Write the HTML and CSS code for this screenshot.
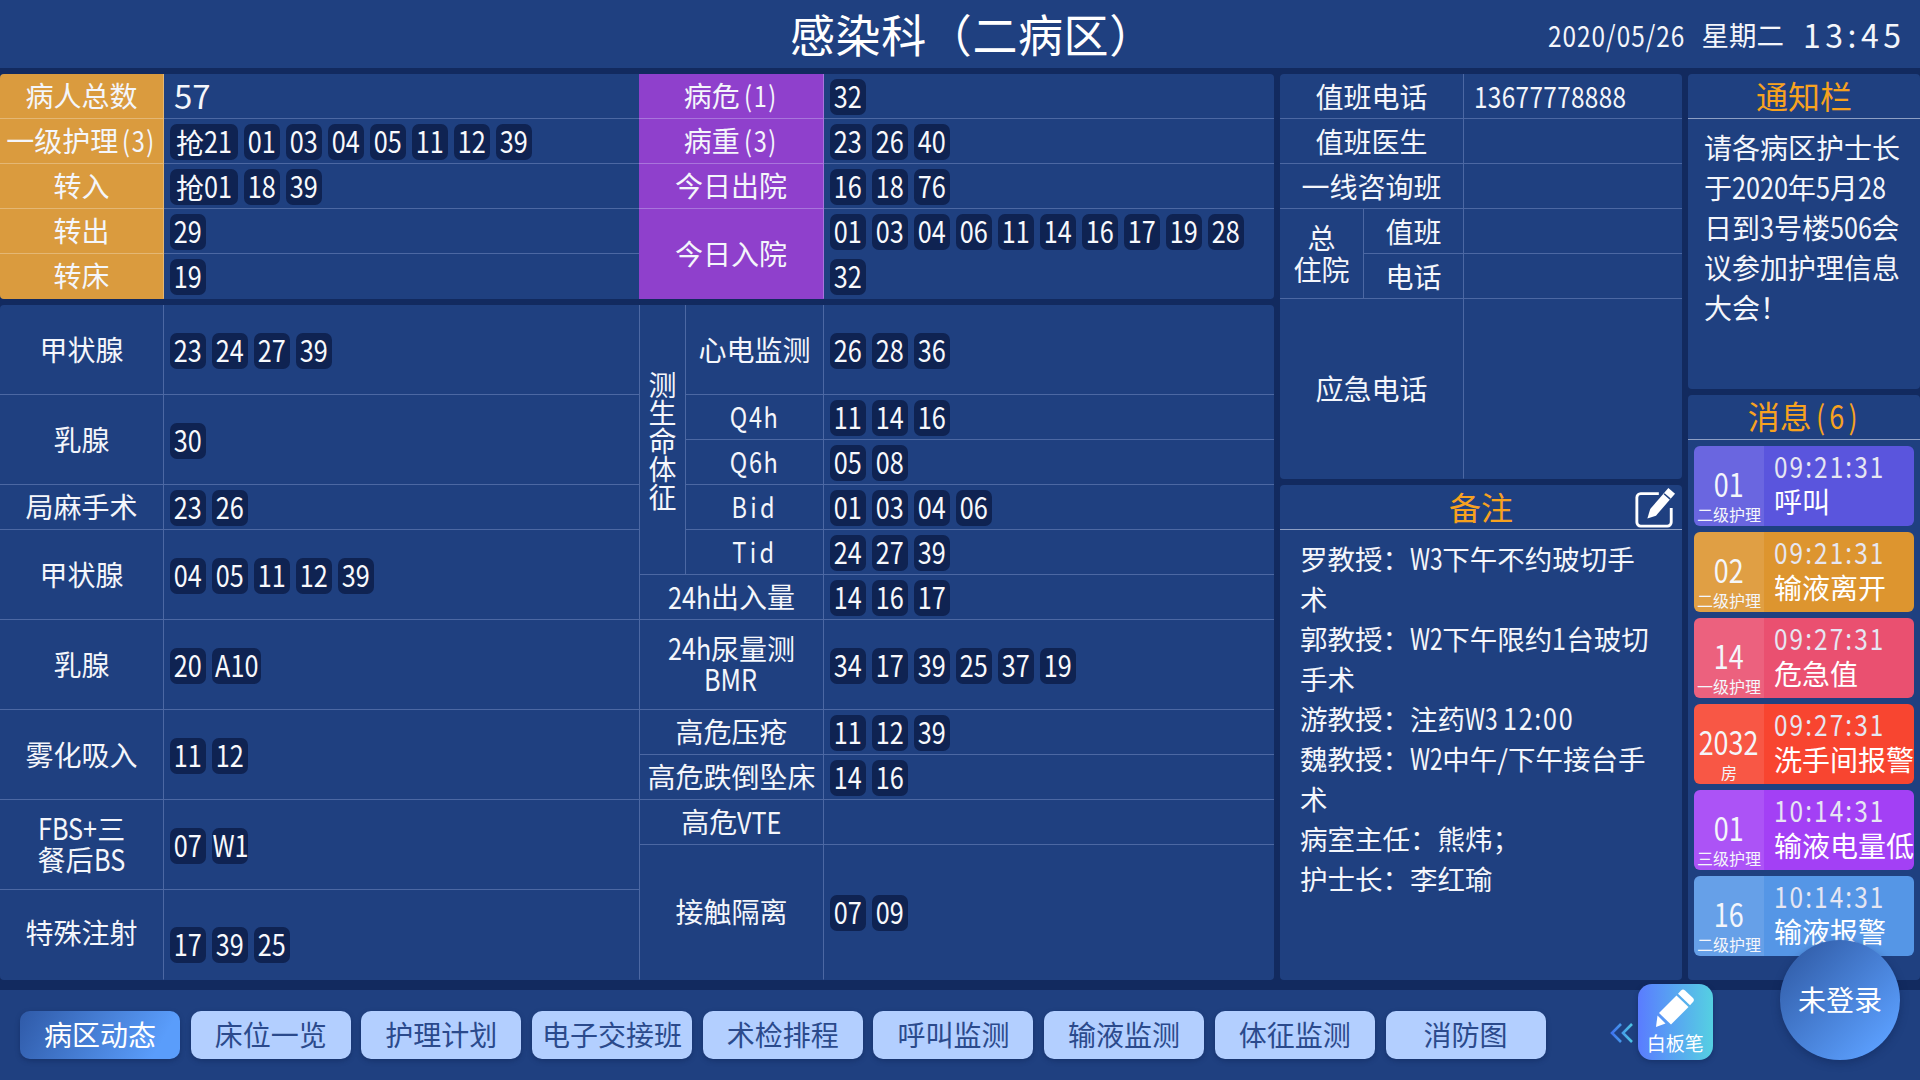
FILE: index.html
```html
<!DOCTYPE html>
<html lang="zh-CN">
<head>
<meta charset="utf-8">
<title>感染科（二病区）</title>
<link rel="stylesheet" href="styles.css">
</head>
<body>
<div class="page">
  <header class="header">
    <div></div>
    <h1 class="title">感染科（二病区）</h1>
    <div class="clock"><span class="date">2020/05/26</span><span class="week">星期二</span><span class="time">13:45</span></div>
  </header>

  <main class="main">
    <div class="col-a">
      <section class="panel top">
        <div class="grid g-left">
          <div class="cell lab or">病人总数</div><div class="cell val big">57</div>
          <div class="cell lab or">一级护理<span class="par">(3)</span></div><div class="cell val"><span class="pill wq">抢<b class="nr n2">21</b></span><span class="pill"><b>01</b></span><span class="pill"><b>03</b></span><span class="pill"><b>04</b></span><span class="pill"><b>05</b></span><span class="pill"><b>11</b></span><span class="pill"><b>12</b></span><span class="pill"><b>39</b></span></div>
          <div class="cell lab or">转入</div><div class="cell val"><span class="pill wq">抢<b class="nr n2">01</b></span><span class="pill"><b>18</b></span><span class="pill"><b>39</b></span></div>
          <div class="cell lab or">转出</div><div class="cell val"><span class="pill"><b>29</b></span></div>
          <div class="cell lab or nb">转床</div><div class="cell val nb"><span class="pill"><b>19</b></span></div>
        </div>
        <div class="grid g-pur">
          <div class="cell lab pu">病危<span class="par">(1)</span></div><div class="cell val"><span class="pill"><b>32</b></span></div>
          <div class="cell lab pu">病重<span class="par">(3)</span></div><div class="cell val"><span class="pill"><b>23</b></span><span class="pill"><b>26</b></span><span class="pill"><b>40</b></span></div>
          <div class="cell lab pu">今日出院</div><div class="cell val"><span class="pill"><b>16</b></span><span class="pill"><b>18</b></span><span class="pill"><b>76</b></span></div>
          <div class="cell lab pu r2 nb">今日入院</div><div class="cell val r2 nb"><span class="pill"><b>01</b></span><span class="pill"><b>03</b></span><span class="pill"><b>04</b></span><span class="pill"><b>06</b></span><span class="pill"><b>11</b></span><span class="pill"><b>14</b></span><span class="pill"><b>16</b></span><span class="pill"><b>17</b></span><span class="pill"><b>19</b></span><span class="pill"><b>28</b></span><span class="pill"><b>32</b></span></div>
        </div>
      </section>

      <section class="panel bottom">
        <div class="grid g-left">
          <div class="cell lab r2">甲状腺</div><div class="cell val r2"><span class="pill"><b>23</b></span><span class="pill"><b>24</b></span><span class="pill"><b>27</b></span><span class="pill"><b>39</b></span></div>
          <div class="cell lab r2">乳腺</div><div class="cell val r2"><span class="pill"><b>30</b></span></div>
          <div class="cell lab">局麻手术</div><div class="cell val"><span class="pill"><b>23</b></span><span class="pill"><b>26</b></span></div>
          <div class="cell lab r2">甲状腺</div><div class="cell val r2"><span class="pill"><b>04</b></span><span class="pill"><b>05</b></span><span class="pill"><b>11</b></span><span class="pill"><b>12</b></span><span class="pill"><b>39</b></span></div>
          <div class="cell lab r2">乳腺</div><div class="cell val r2"><span class="pill"><b>20</b></span><span class="pill wa"><b>A10</b></span></div>
          <div class="cell lab r2">雾化吸入</div><div class="cell val r2"><span class="pill"><b>11</b></span><span class="pill"><b>12</b></span></div>
          <div class="cell lab r2 two"><span><b class="nr n4">FBS+</b>三<br>餐后<b class="nr n2">BS</b></span></div><div class="cell val r2"><span class="pill"><b>07</b></span><span class="pill"><b>W1</b></span></div>
          <div class="cell lab r2 nb up">特殊注射</div><div class="cell val r2 nb low"><span class="pill"><b>17</b></span><span class="pill"><b>39</b></span><span class="pill"><b>25</b></span></div>
        </div>
        <div class="grid g-mid">
          <div class="cell lab r6 vert">测<br>生<br>命<br>体<br>征</div>
          <div class="cell lab r2">心电监测</div><div class="cell val r2"><span class="pill"><b>26</b></span><span class="pill"><b>28</b></span><span class="pill"><b>36</b></span></div>
          <div class="cell lab"><span class="eng">Q4h</span></div><div class="cell val"><span class="pill"><b>11</b></span><span class="pill"><b>14</b></span><span class="pill"><b>16</b></span></div>
          <div class="cell lab"><span class="eng">Q6h</span></div><div class="cell val"><span class="pill"><b>05</b></span><span class="pill"><b>08</b></span></div>
          <div class="cell lab"><span class="eng sp">Bid</span></div><div class="cell val"><span class="pill"><b>01</b></span><span class="pill"><b>03</b></span><span class="pill"><b>04</b></span><span class="pill"><b>06</b></span></div>
          <div class="cell lab"><span class="eng sp">Tid</span></div><div class="cell val"><span class="pill"><b>24</b></span><span class="pill"><b>27</b></span><span class="pill"><b>39</b></span></div>
          <div class="cell lab wide"><b class="nr n3">24h</b>出入量</div><div class="cell val"><span class="pill"><b>14</b></span><span class="pill"><b>16</b></span><span class="pill"><b>17</b></span></div>
          <div class="cell lab wide r2 two"><span><b class="nr n3">24h</b>尿量测<br><b class="nr n3">BMR</b></span></div><div class="cell val r2"><span class="pill"><b>34</b></span><span class="pill"><b>17</b></span><span class="pill"><b>39</b></span><span class="pill"><b>25</b></span><span class="pill"><b>37</b></span><span class="pill"><b>19</b></span></div>
          <div class="cell lab wide">高危压疮</div><div class="cell val"><span class="pill"><b>11</b></span><span class="pill"><b>12</b></span><span class="pill"><b>39</b></span></div>
          <div class="cell lab wide">高危跌倒坠床</div><div class="cell val"><span class="pill"><b>14</b></span><span class="pill"><b>16</b></span></div>
          <div class="cell lab wide">高危<b class="nr n3">VTE</b></div><div class="cell val"></div>
          <div class="cell lab wide r3 nb">接触隔离</div><div class="cell val r3 nb"><span class="pill"><b>07</b></span><span class="pill"><b>09</b></span></div>
        </div>
      </section>
    </div>

    <div class="col-b">
      <section class="panel duty">
        <div class="cell lab wide2">值班电话</div><div class="cell txt"><span class="phone">13677778888</span></div>
        <div class="cell lab wide2">值班医生</div><div class="cell txt"></div>
        <div class="cell lab wide2">一线咨询班</div><div class="cell txt"></div>
        <div class="cell lab r2 hosp">总<br>住院</div><div class="cell lab">值班</div><div class="cell txt"></div>
        <div class="cell lab">电话</div><div class="cell txt"></div>
        <div class="cell lab wide2 tall nb">应急电话</div><div class="cell txt tall nb"></div>
      </section>
      <section class="panel remark">
        <div class="ptitle">备注
          <svg class="edit" viewBox="0 0 44 44" aria-hidden="true"><path d="M26 7H7a4 4 0 0 0-4 4v26a4 4 0 0 0 4 4h28a4 4 0 0 0 4-4V22" fill="none" stroke="#fff" stroke-width="3"/><path d="M36 1l7 6-20 23-9 3 3-10z" fill="#fff"/><path d="M31.500 7l6.500 5.700" stroke="#1f4080" stroke-width="1.500"/></svg>
        </div>
        <div class="ptext rtext">
          <p>罗教授：<b class="nr w2">W3</b>下午不约玻切手术</p>
          <p>郭教授：<b class="nr w2">W2</b>下午限约<b class="nr n1">1</b>台玻切手术</p>
          <p>游教授：注药<b class="nr w2">W3</b> <b class="nr clk">12:00</b></p>
          <p>魏教授：<b class="nr w2">W2</b>中午/下午接台手术</p>
          <p>病室主任：熊炜；</p>
          <p>护士长：李红瑜</p>
        </div>
      </section>
    </div>

    <div class="col-c">
      <section class="panel notice">
        <div class="ptitle">通知栏</div>
        <div class="ptext ntext">请各病区护士长于<b class="nr n4">2020</b>年<b class="nr n1">5</b>月<b class="nr n2">28</b>日到<b class="nr n1">3</b>号楼<b class="nr n3">506</b>会议参加护理信息大会！</div>
      </section>
      <section class="panel msgs">
        <div class="ptitle">消息<span class="par">(6)</span></div>
        <div class="mlist">
          <div class="msg m1"><div class="mleft"><span class="mnum">01</span><span class="msub">二级护理</span></div><div class="mright"><span class="mtime">09:21:31</span><span class="mname">呼叫</span></div></div>
          <div class="msg m2"><div class="mleft"><span class="mnum">02</span><span class="msub">二级护理</span></div><div class="mright"><span class="mtime">09:21:31</span><span class="mname">输液离开</span></div></div>
          <div class="msg m3"><div class="mleft"><span class="mnum">14</span><span class="msub">一级护理</span></div><div class="mright"><span class="mtime">09:27:31</span><span class="mname">危急值</span></div></div>
          <div class="msg m4"><div class="mleft"><span class="mnum">2032</span><span class="msub">房</span></div><div class="mright"><span class="mtime">09:27:31</span><span class="mname">洗手间报警</span></div></div>
          <div class="msg m5"><div class="mleft"><span class="mnum">01</span><span class="msub">三级护理</span></div><div class="mright"><span class="mtime">10:14:31</span><span class="mname">输液电量低</span></div></div>
          <div class="msg m6"><div class="mleft"><span class="mnum">16</span><span class="msub">二级护理</span></div><div class="mright"><span class="mtime">10:14:31</span><span class="mname">输液报警</span></div></div>
        </div>
      </section>
    </div>
  </main>

  <nav class="nav">
    <a class="btn on">病区动态</a>
    <a class="btn">床位一览</a>
    <a class="btn">护理计划</a>
    <a class="btn">电子交接班</a>
    <a class="btn">术检排程</a>
    <a class="btn">呼叫监测</a>
    <a class="btn">输液监测</a>
    <a class="btn">体征监测</a>
    <a class="btn">消防图</a>
    <svg class="chev" viewBox="0 0 24 22" aria-hidden="true">
      <defs><linearGradient id="cg" x1="0" x2="1" y1="0" y2="0"><stop offset="0" stop-color="#3f74f0"/><stop offset="1" stop-color="#4cc4e4"/></linearGradient></defs>
      <path d="M11 2L2 11l9 9M22 2l-9 9 9 9" fill="none" stroke="url(#cg)" stroke-width="2.600"/>
    </svg>
    <div class="board">
      <svg class="pen" viewBox="0 0 40 40" aria-hidden="true"><path d="M26 1.500a3 3 0 0 1 4 0l8 7.500a3 3 0 0 1 0 4l-3 3.200-12-11.500z" fill="#fff"/><path d="M21.500 6.500l12 11.500L16 35.500 4 24z" fill="#fff"/><path d="M2.500 26.500l8 8-9.500 3.500z" fill="#fff"/></svg>
      <span class="blabel">白板笔</span>
    </div>
  </nav>
  <div class="login">未登录</div>
</div>
</body>
</html>
```

FILE: styles.css
```css
* { box-sizing: border-box; }
html, body { margin: 0; padding: 0; }
body {
  width: 1920px; height: 1080px; overflow: hidden;
  background: #1f4080; color: #f4f6fb;
  font-family: "Noto Sans CJK SC", sans-serif;
  font-size: 28px;
}
b { font-weight: 400; }
.page { position: relative; width: 1920px; height: 1080px; display: flex; flex-direction: column; }

.header { height: 68px; display: grid; grid-template-columns: 790px 360px 1fr; align-items: center; padding-right: 19px; }
.title { margin: 0; font-size: 45px; font-weight: 400; line-height: 64px; color: #fff; white-space: nowrap; letter-spacing: .600px; }
.clock { justify-self: end; display: flex; align-items: center; gap: 15px; }
.date { width: 139px; font-size: 29px; line-height: 36px; white-space: nowrap; letter-spacing: 1.200px; transform: scaleX(.84); transform-origin: 0 50%; }
.week { font-size: 27.500px; line-height: 36px; white-space: nowrap; }
.time { font-size: 32px; line-height: 36px; white-space: nowrap; letter-spacing: 4.500px; margin: 0 -4.500px 0 4px; }

.main { background: #122a5f; padding: 6px 0 10px; display: flex; gap: 6px; height: 922px; }
.col-a { width: 1274px; display: flex; flex-direction: column; gap: 6px; }
.col-b { width: 402px; display: flex; flex-direction: column; gap: 6px; }
.col-c { width: 232px; display: flex; flex-direction: column; gap: 6px; }
.panel { background: #1f4080; border-radius: 4px; overflow: hidden; }

.top { height: 225px; display: flex; }
.bottom { height: 675px; display: flex; }
.grid { display: grid; grid-auto-rows: 45px; }
.g-left { width: 639px; grid-template-columns: 164px 475px; }
.g-pur { width: 635px; grid-template-columns: 185px 450px; }
.g-mid { width: 635px; grid-template-columns: 47px 138px 450px; }

.cell { display: flex; align-items: center; border-bottom: 1px solid #4c68a3; min-width: 0; }
.nb { border-bottom-color: transparent; }
.r2 { grid-row: span 2; }
.r3 { grid-row: span 3; }
.r6 { grid-row: span 6; }
.lab { justify-content: center; text-align: center; border-right: 1px solid #4c68a3; line-height: 32px; white-space: nowrap; padding-bottom: 2px; }
.or { background: #da9b3e; border-bottom-color: #e4b774; border-right-color: #e4b774; }
.or.nb { border-bottom-color: transparent; }
.pu { background: #8f40cc; border-bottom-color: #a974dc; border-right-color: #a974dc; }
.pu.nb { border-bottom-color: transparent; }
.val { flex-wrap: wrap; align-content: center; gap: 9px 6px; padding: 2px 0 0 6px; }
.big { font-size: 33px; padding-left: 10px; padding-top: 0; padding-bottom: 3px; }
.low { padding-top: 21px; }
.up { padding-bottom: 5px; }
.par { display: inline-block; margin: 0 -6px 0 4px; letter-spacing: 2px; transform: scaleX(.84); transform-origin: 0 50%; }
.two { line-height: 30px; padding-bottom: 4px; }
.g-mid .lab:first-child, .g-mid .wide { border-left: 1px solid #4c68a3; }
.wide { grid-column: span 2; }
.vert { flex-direction: column; line-height: 28px; font-size: 28px; padding-bottom: 0; }
.eng { display: inline-block; letter-spacing: 2px; transform: scaleX(.84); }
.sp { letter-spacing: 4px; }

.nr { display: inline-block; line-height: 1; font-size: 30px; transform: scaleX(.84); transform-origin: 0 50%; }
.n1 { margin-right: -.09em; }
.n2 { margin-right: -.18em; }
.n3 { margin-right: -.28em; }
.n4 { margin-right: -.36em; }
.w2 { transform: scaleX(.76); margin-right: -.36em; }
.clk { letter-spacing: 2px; margin-right: -.6em; }

.pill {
  width: 36px; height: 36px; flex: none;
  display: inline-flex; align-items: center; justify-content: center;
  background: #0f2352; border-radius: 7px;
  font-size: 30px; line-height: 34px; color: #f8f9fc; white-space: nowrap;
}
.pill > b:not(.nr) { display: inline-block; transform: translateY(-2px) scaleX(.84); }
.pill > .nr { line-height: 34px; transform: translateY(-2px) scaleX(.84); }
.wq { width: 68px; font-size: 28px; }
.wa { width: 49px; }

.duty { height: 405px; display: grid; grid-template-columns: 84px 100px 218px; grid-auto-rows: 45px; }
.duty .lab { padding-bottom: 1px; }
.wide2 { grid-column: span 2; }
.txt { padding: 0 0 2px 10px; }
.phone { display: inline-block; font-size: 29px; white-space: nowrap; transform: scaleX(.84); transform-origin: 0 50%; letter-spacing: .400px; }
.tall { grid-row: span 4; }
.duty .hosp { line-height: 32px; padding-bottom: 2px; }

.remark { height: 495px; }
.ptitle { position: relative; height: 45px; display: flex; justify-content: center; align-items: center; color: #f7a21f; font-size: 32px; border-bottom: 1px solid #8d9fc4; padding-bottom: 2px; }
.msgs .ptitle { padding-bottom: 4px; }
.ptitle .par { letter-spacing: 5px; margin-right: -10px; }
.edit { position: absolute; right: 6px; top: 2px; width: 42px; height: 42px; }
.ptext { line-height: 40px; }
.rtext { padding: 8px 28px 0 20px; font-size: 27.500px; }
.rtext p { margin: 0; }
.notice { height: 315px; }
.ntext { padding: 8px 14px 0 16px; font-size: 28px; }
.msgs { height: 585px; }
.mlist { padding: 6px 6px 0; display: flex; flex-direction: column; gap: 6px; }
.msg { height: 80px; display: flex; border-radius: 6px; overflow: hidden; }
.mleft { width: 70px; background: rgba(255,255,255,.1); display: flex; flex-direction: column; align-items: center; padding-top: 20px; }
.mnum { font-size: 32px; line-height: 34px; transform: scaleX(.84); }
.msub { font-size: 16px; line-height: 24px; white-space: nowrap; margin-top: 2px; }
.mright { flex: 1; padding: 1px 0 0 10px; display: flex; flex-direction: column; white-space: nowrap; }
.mtime { font-size: 29px; line-height: 36px; letter-spacing: 2.500px; color: #e6e6f2; transform: scaleX(.84); transform-origin: 0 50%; }
.mname { font-size: 28px; line-height: 36px; color: #fff; }
.m1 { background: #5a55dd; }
.m2 { background: #dd952f; }
.m3 { background: #ea5070; }
.m4 { background: #f84530; }
.m5 { background: #a340f5; }
.m6 { background: #5596e6; }

.nav { flex: 1; display: flex; align-items: flex-start; gap: 10.700px; padding: 21px 0 0 20px; position: relative; }
.btn { width: 160px; height: 48px; border-radius: 10px; display: flex; align-items: center; justify-content: center; background: #b3cfff; color: #2b4a8c; box-shadow: 0 2px 5px rgba(10,25,70,.35); padding-bottom: 2px; }
.btn.on { background: linear-gradient(120deg, #2f5aa8, #5a9dfb 85%); color: #fff; }
.chev { width: 24px; height: 22px; margin: 11px 0 0 54px; flex: none; }
.board { width: 75px; height: 76px; margin: -27px 0 0 -7px; border-radius: 14px; background: linear-gradient(90deg, #5a7cff, #55d0e2); display: flex; flex-direction: column; align-items: center; position: relative; box-shadow: 0 2px 5px rgba(10,25,70,.35); flex: none; }
.pen { width: 40px; height: 40px; margin-top: 5px; flex: none; }
.blabel { font-size: 19px; line-height: 28px; white-space: nowrap; color: #fff; }

.login { position: absolute; left: 1780px; top: 940px; width: 120px; height: 120px; border-radius: 50%; background: linear-gradient(135deg, #2d569f, #5a9dfb 85%); display: flex; align-items: center; justify-content: center; box-shadow: 0 3px 8px rgba(10,25,70,.35); color: #fff; padding-bottom: 2px; }
```
